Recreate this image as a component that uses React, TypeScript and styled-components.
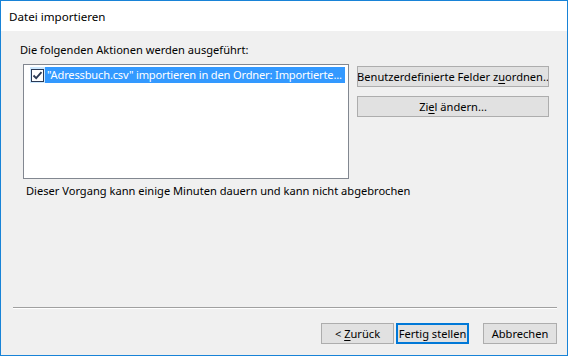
import React from 'react';
import styled, { createGlobalStyle } from 'styled-components';

const GlobalStyle = createGlobalStyle`
	html, body {
		margin: 0;
		padding: 0;
		background: #ffffff;
	}
	* {
		box-sizing: border-box;
	}
`;

const Window = styled.div`
	width: 568px;
	height: 356px;
	border: 1px solid #1883d7;
	display: flex;
	flex-direction: column;
	font-family: 'Noto Sans', 'DejaVu Sans', sans-serif;
	font-size: 11.1px;
	color: #000000;
	background: #f0f0f0;
`;

const TitleBar = styled.div`
	height: 30px;
	background: #ffffff;
	display: flex;
	align-items: center;
	padding-left: 8px;
	font-size: 11.6px;
	color: #000000;
`;

const Body = styled.div`
	flex: 1;
	display: flex;
	flex-direction: column;
	padding: 11px 10px 0 19px;
`;

const Label = styled.div`
	line-height: 16px;
	height: 16px;
`;

const Main = styled.div`
	display: flex;
	margin-top: 6px;
	padding-left: 3px;
	gap: 8px;
`;

const ListBox = styled.div`
	width: 326px;
	height: 115px;
	background: #ffffff;
	border: 1px solid #828790;
	padding: 2px 3px 0 6px;
`;

const ListRow = styled.div`
	display: flex;
	height: 16px;
	align-items: stretch;
`;

const CheckCell = styled.div`
	width: 15px;
	background: #cce8ff;
	display: flex;
	align-items: center;
	justify-content: center;
`;

const RowText = styled.div`
	flex: 1;
	background: #3399ff;
	color: #ffffff;
	padding-left: 2px;
	line-height: 16px;
	white-space: nowrap;
	overflow: hidden;
	letter-spacing: -0.17px;
`;

const SideButtons = styled.div`
	display: flex;
	flex-direction: column;
	gap: 9px;
	padding-top: 2px;
`;

const Button = styled.button<{ $width: number; $default?: boolean }>`
	width: ${(p) => p.$width}px;
	height: 21px;
	background: #e1e1e1;
	border: ${(p) => (p.$default ? '2px solid #0078d7' : '1px solid #adadad')};
	font-family: inherit;
	font-size: 11.1px;
	color: #000000;
	padding: 0;
	display: flex;
	align-items: center;
	justify-content: center;
	white-space: nowrap;
	overflow: hidden;

	u {
		text-decoration-thickness: 1px;
		text-underline-offset: 2px;
	}
`;

const Note = styled.div`
	margin-top: 4px;
	padding-left: 6px;
	line-height: 16px;
`;

const Spacer = styled.div`
	flex: 1;
`;

const Separator = styled.div`
	margin-left: -7px;
	height: 2px;
	border-top: 1px solid #a0a0a0;
	border-bottom: 1px solid #ffffff;
`;

const Footer = styled.div`
	display: flex;
	justify-content: flex-end;
	align-items: center;
	padding: 14px 0 11px;
	gap: 2px;
`;

const Gap = styled.div`
	width: 10px;
`;

function CheckIcon() {
	return (
		<svg width="13" height="13" viewBox="0 0 13 13">
			<rect x="0.5" y="0.5" width="12" height="12" fill="#ffffff" stroke="#2b3a55" />
			<path d="M2.5 6.5 L5.2 9.2 L10.5 3.2" fill="none" stroke="#2b3a55" strokeWidth="1.8" />
		</svg>
	);
}

export default function App() {
	return (
		<>
			<GlobalStyle />
			<Window>
				<TitleBar>Datei importieren</TitleBar>
				<Body>
					<Label>Die folgenden Aktionen werden ausgeführt:</Label>
					<Main>
						<ListBox>
							<ListRow>
								<CheckCell>
									<CheckIcon />
								</CheckCell>
								<RowText>"Adressbuch.csv" importieren in den Ordner: Importierte...</RowText>
							</ListRow>
						</ListBox>
						<SideButtons>
							<Button $width={192}>
								<span>
									Benutzerdefinierte Felder z<u>u</u>ordnen..
								</span>
							</Button>
							<Button $width={192}>
								<span>
									Zi<u>e</u>l ändern...
								</span>
							</Button>
						</SideButtons>
					</Main>
					<Note>Dieser Vorgang kann einige Minuten dauern und kann nicht abgebrochen</Note>
					<Spacer />
					<Separator />
					<Footer>
						<Button $width={73}>
							<span>
								&lt; <u>Z</u>urück
							</span>
						</Button>
						<Button $width={73} $default>
							Fertig stellen
						</Button>
						<Gap />
						<Button $width={74}>Abbrechen</Button>
					</Footer>
				</Body>
			</Window>
		</>
	);
}
